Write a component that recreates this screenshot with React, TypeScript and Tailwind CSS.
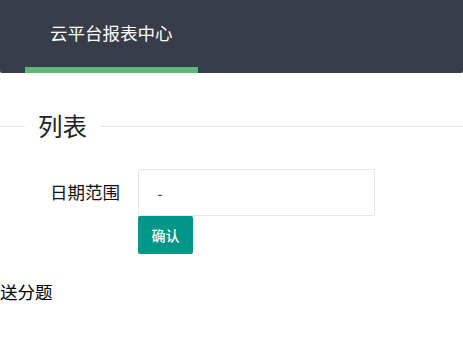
export default function App() {
  return (
    <div className="w-[463px] h-[339px] bg-white font-['Noto_Sans_CJK_SC',sans-serif] text-[#333] overflow-hidden">
      {/* top nav */}
      <div className="h-[73px] bg-[#393d49] rounded-b-[2px] flex pl-[25px]">
        <div className="w-[173px] flex flex-col">
          <div className="flex-1 flex items-center pl-[25px] text-[17.5px] text-white">云平台报表中心</div>
          <div className="h-[6px] bg-[#5fb878]" />
        </div>
      </div>

      {/* fieldset title */}
      <div className="mt-[38px] flex items-center h-[30px]">
        <div className="w-[25px] h-px bg-[#e6e6e6]" />
        <div className="px-[13px] text-[24.5px] leading-[30px] text-[#222]">列表</div>
        <div className="flex-1 h-px bg-[#e6e6e6]" />
      </div>

      {/* form */}
      <div className="mt-[28px] flex items-center">
        <label className="pl-[50px] w-[138px] text-[17.5px] text-[#111]">日期范围</label>
        <div className="w-[237px] h-[47px] border border-[#e6e6e6] rounded-[2px] flex items-center pl-[18px] text-[17px] text-[#555]">
          -
        </div>
      </div>
      <div className="pl-[138px]">
        <button className="w-[55px] h-[38px] bg-[#009688] rounded-[2px] text-white text-[14px] font-medium">确认</button>
      </div>

      <div className="mt-[26px] text-[17.5px] leading-[24px] text-black">送分题</div>
    </div>
  );
}
